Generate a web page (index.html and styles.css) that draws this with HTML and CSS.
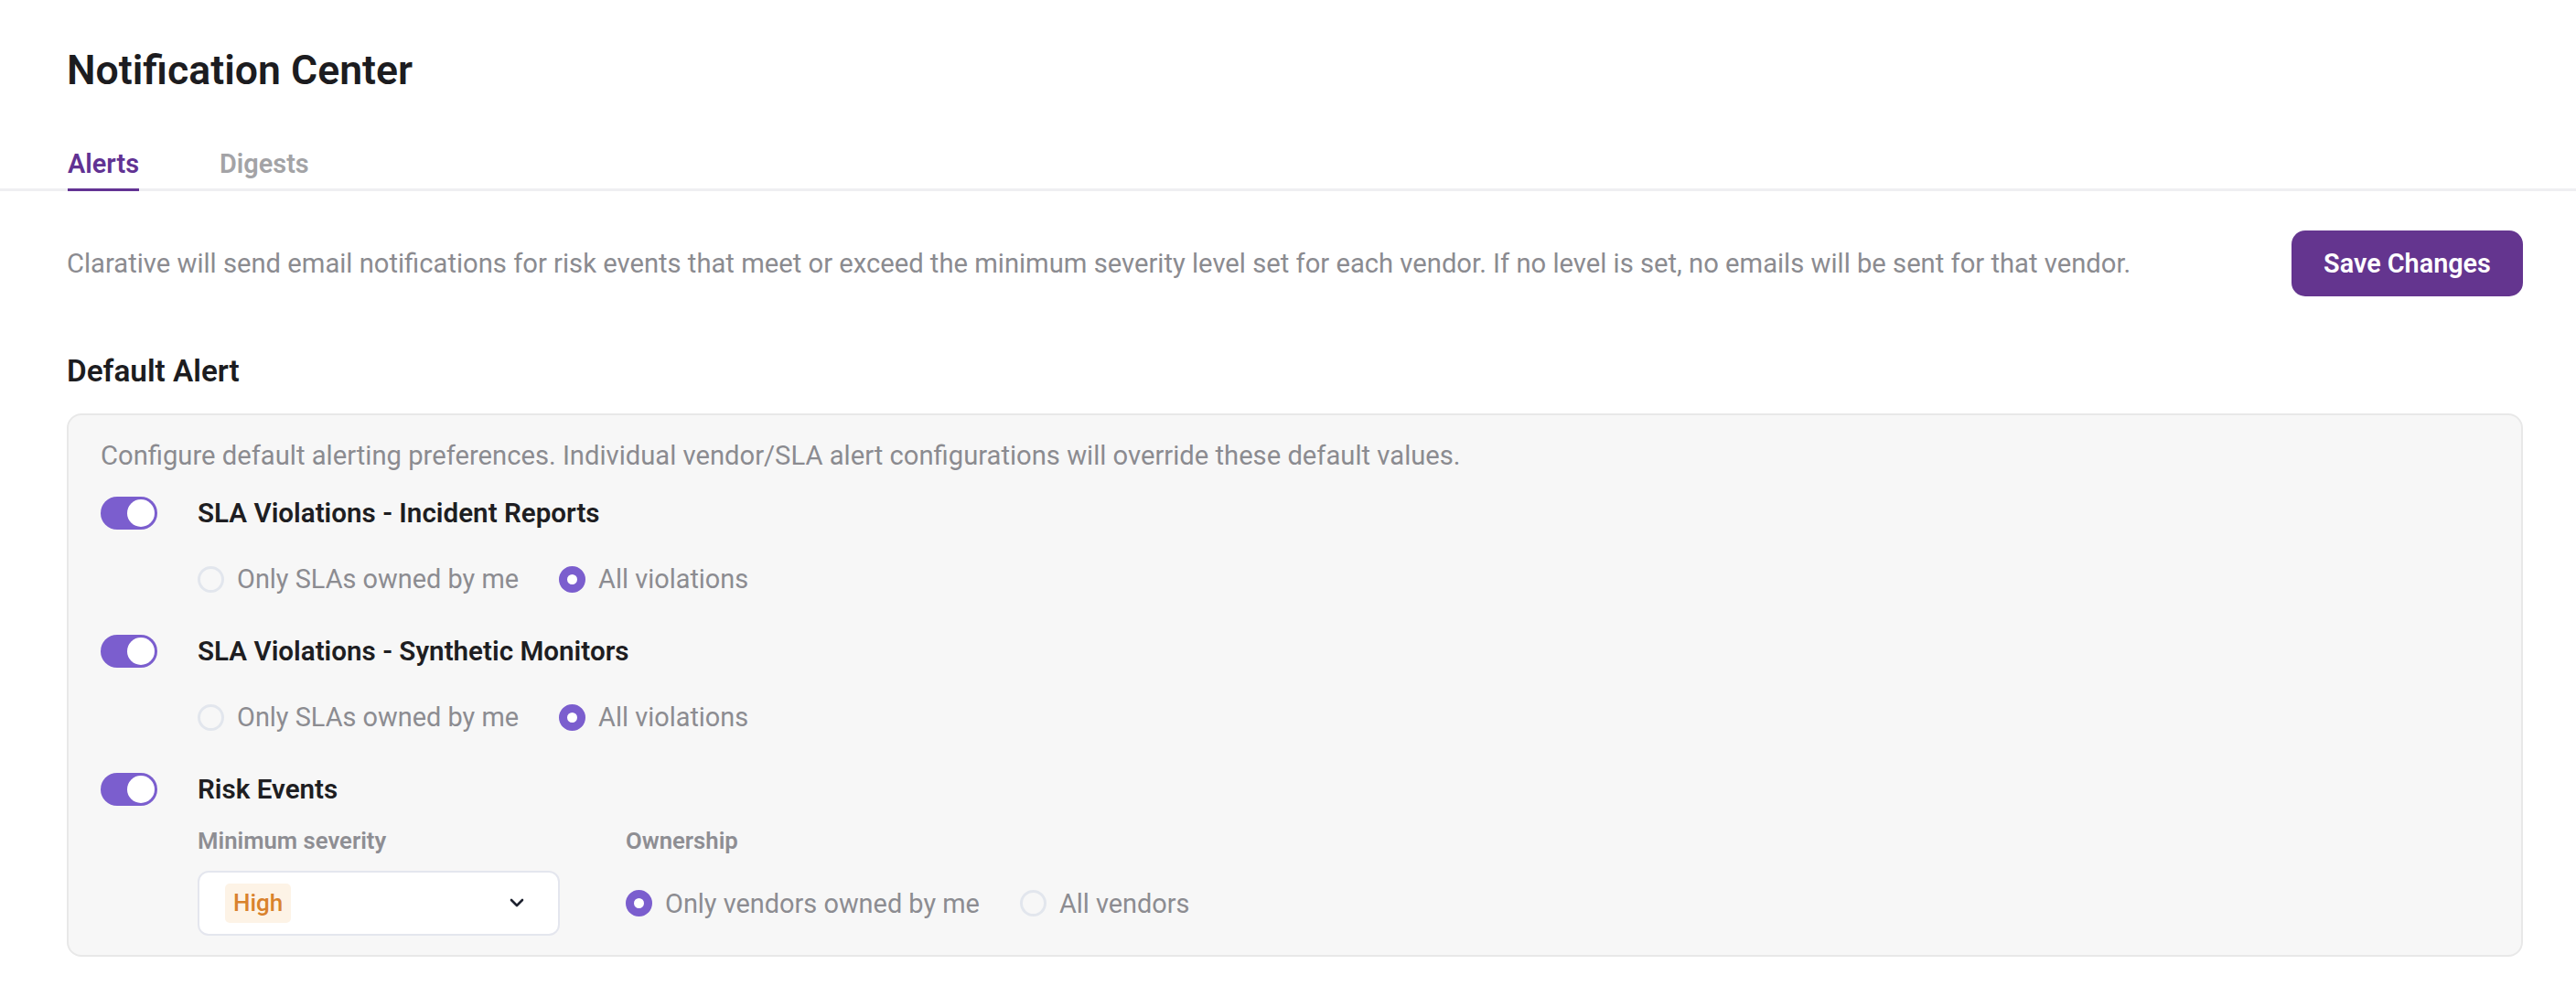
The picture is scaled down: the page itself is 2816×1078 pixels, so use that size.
FILE: index.html
```html
<!DOCTYPE html>
<html lang="en">
<head>
<meta charset="utf-8">
<title>Notification Center</title>
<link rel="stylesheet" href="styles.css">
</head>
<body>
<div class="page">
  <header class="page-header">
    <h1 class="page-title">Notification Center</h1>
    <nav class="tabs">
      <a class="tab tab-active">Alerts</a>
      <a class="tab">Digests</a>
    </nav>
  </header>

  <main class="content">
    <div class="intro-row">
      <p class="intro-text">Clarative will send email notifications for risk events that meet or exceed the minimum severity level set for each vendor. If no level is set, no emails will be sent for that vendor.</p>
      <button class="btn-primary">Save Changes</button>
    </div>

    <h2 class="section-title">Default Alert</h2>

    <section class="card">
      <p class="card-desc">Configure default alerting preferences. Individual vendor/SLA alert configurations will override these default values.</p>

      <div class="alert-group">
        <div class="alert-head">
          <span class="toggle toggle-on"><span class="toggle-knob"></span></span>
          <span class="alert-title">SLA Violations - Incident Reports</span>
        </div>
        <div class="alert-body radio-row">
          <label class="radio"><span class="radio-dot"></span><span class="radio-label">Only SLAs owned by me</span></label>
          <label class="radio"><span class="radio-dot radio-checked"></span><span class="radio-label">All violations</span></label>
        </div>
      </div>

      <div class="alert-group">
        <div class="alert-head">
          <span class="toggle toggle-on"><span class="toggle-knob"></span></span>
          <span class="alert-title">SLA Violations - Synthetic Monitors</span>
        </div>
        <div class="alert-body radio-row">
          <label class="radio"><span class="radio-dot"></span><span class="radio-label">Only SLAs owned by me</span></label>
          <label class="radio"><span class="radio-dot radio-checked"></span><span class="radio-label">All violations</span></label>
        </div>
      </div>

      <div class="alert-group">
        <div class="alert-head">
          <span class="toggle toggle-on"><span class="toggle-knob"></span></span>
          <span class="alert-title">Risk Events</span>
        </div>
        <div class="alert-body risk-grid">
          <span class="field-label">Minimum severity</span>
          <span class="field-label">Ownership</span>
          <div class="select">
            <span class="badge-high">High</span>
            <svg class="chevron" width="16" height="11" viewBox="0 0 16 11"><polyline points="2,2 8,8 14,2" fill="none" stroke="#1f2330" stroke-width="2.6" stroke-linecap="round" stroke-linejoin="round"/></svg>
          </div>
          <div class="radio-row">
            <label class="radio"><span class="radio-dot radio-checked"></span><span class="radio-label">Only vendors owned by me</span></label>
            <label class="radio"><span class="radio-dot"></span><span class="radio-label">All vendors</span></label>
          </div>
        </div>
      </div>
    </section>
  </main>
</div>
</body>
</html>
```
FILE: styles.css
```css
* { box-sizing: border-box; }
html, body { margin: 0; padding: 0; background: #ffffff; }
body {
  font-family: Roboto, "Liberation Sans", Arial, sans-serif;
  color: #1e1e22;
}
.page { padding-top: 49px; }

.page-title {
  margin: 0;
  padding: 0 58px 0 73px;
  font-size: 44.6px;
  line-height: 56px;
  font-weight: 600;
  color: #1c1c20;
}

.tabs {
  display: flex;
  gap: 88px;
  margin-top: 54px;
  padding-left: 74px;
  border-bottom: 3px solid #efeff2;
}
.tab {
  display: block;
  font-size: 28.9px;
  line-height: 40px;
  font-weight: 600;
  color: #a3a3a6;
  padding-bottom: 7px;
  border-bottom: 3px solid transparent;
  margin-bottom: -3px;
}
.tab-active { color: #613293; border-bottom-color: #633394; }

.content { padding: 0 58px 0 73px; }

.intro-row {
  display: flex;
  align-items: center;
  justify-content: space-between;
  margin-top: 43px;
}
.intro-text {
  margin: 0;
  font-size: 29.2px;
  line-height: 40px;
  color: #8b8b90;
}
.btn-primary {
  flex: none;
  width: 253px;
  height: 72px;
  border: none;
  border-radius: 15px;
  background: #64358f;
  color: #ffffff;
  font-family: inherit;
  font-size: 28.8px;
  font-weight: 600;
  padding: 0;
}

.section-title {
  margin: 62px 0 0;
  font-size: 33.3px;
  line-height: 40px;
  font-weight: 600;
  color: #1c1c20;
}

.card {
  margin-top: 26px;
  background: #f7f7f7;
  border: 2px solid #e8e8e8;
  border-radius: 16px;
  padding: 24px 35px 21px;
}
.card-desc {
  margin: 0 0 23px;
  font-size: 29.2px;
  line-height: 40px;
  color: #8b8b90;
}

.alert-group + .alert-group { margin-top: 39px; }
.alert-head {
  display: flex;
  align-items: center;
  gap: 44px;
  height: 40px;
}
.alert-title {
  font-size: 29.6px;
  line-height: 40px;
  font-weight: 600;
  color: #1e1e22;
}

.toggle {
  position: relative;
  flex: none;
  width: 62px;
  height: 36px;
  border-radius: 18px;
  background: #e0e0e4;
}
.toggle-on { background: #7b5ece; }
.toggle-knob {
  position: absolute;
  top: 3px;
  right: 3px;
  width: 30px;
  height: 30px;
  border-radius: 50%;
  background: #ffffff;
}

.alert-body { margin-top: 32px; padding-left: 106px; }

.radio-row { display: flex; align-items: center; gap: 44px; height: 40px; }
.radio { display: flex; align-items: center; gap: 14px; }
.radio-dot {
  flex: none;
  width: 29px;
  height: 29px;
  border-radius: 50%;
  border: 3px solid #e2e6ed;
  background: transparent;
}
.radio-checked {
  border: 9px solid #7b5ece;
  background: #ffffff;
}
.radio-label {
  font-size: 28.9px;
  line-height: 40px;
  color: #8c8c91;
}

.risk-grid {
  display: grid;
  grid-template-columns: 396px auto;
  justify-content: start;
  column-gap: 72px;
  row-gap: 16px;
  margin-top: 19px;
  align-items: center;
}
.field-label {
  font-size: 25.7px;
  line-height: 34px;
  font-weight: 600;
  color: #8e8e93;
}
.select {
  display: flex;
  align-items: center;
  justify-content: space-between;
  height: 71px;
  background: #ffffff;
  border: 2px solid #e4e6ee;
  border-radius: 12px;
  padding: 0 37px 0 28px;
}
.badge-high {
  display: inline-block;
  height: 43px;
  line-height: 43px;
  padding: 0 9px;
  border-radius: 5px;
  background: #fdf3e6;
  color: #d9822c;
  font-size: 26px;
  font-weight: 500;
}
.chevron { display: block; }
.risk-grid .radio-row { height: 71px; }
```
